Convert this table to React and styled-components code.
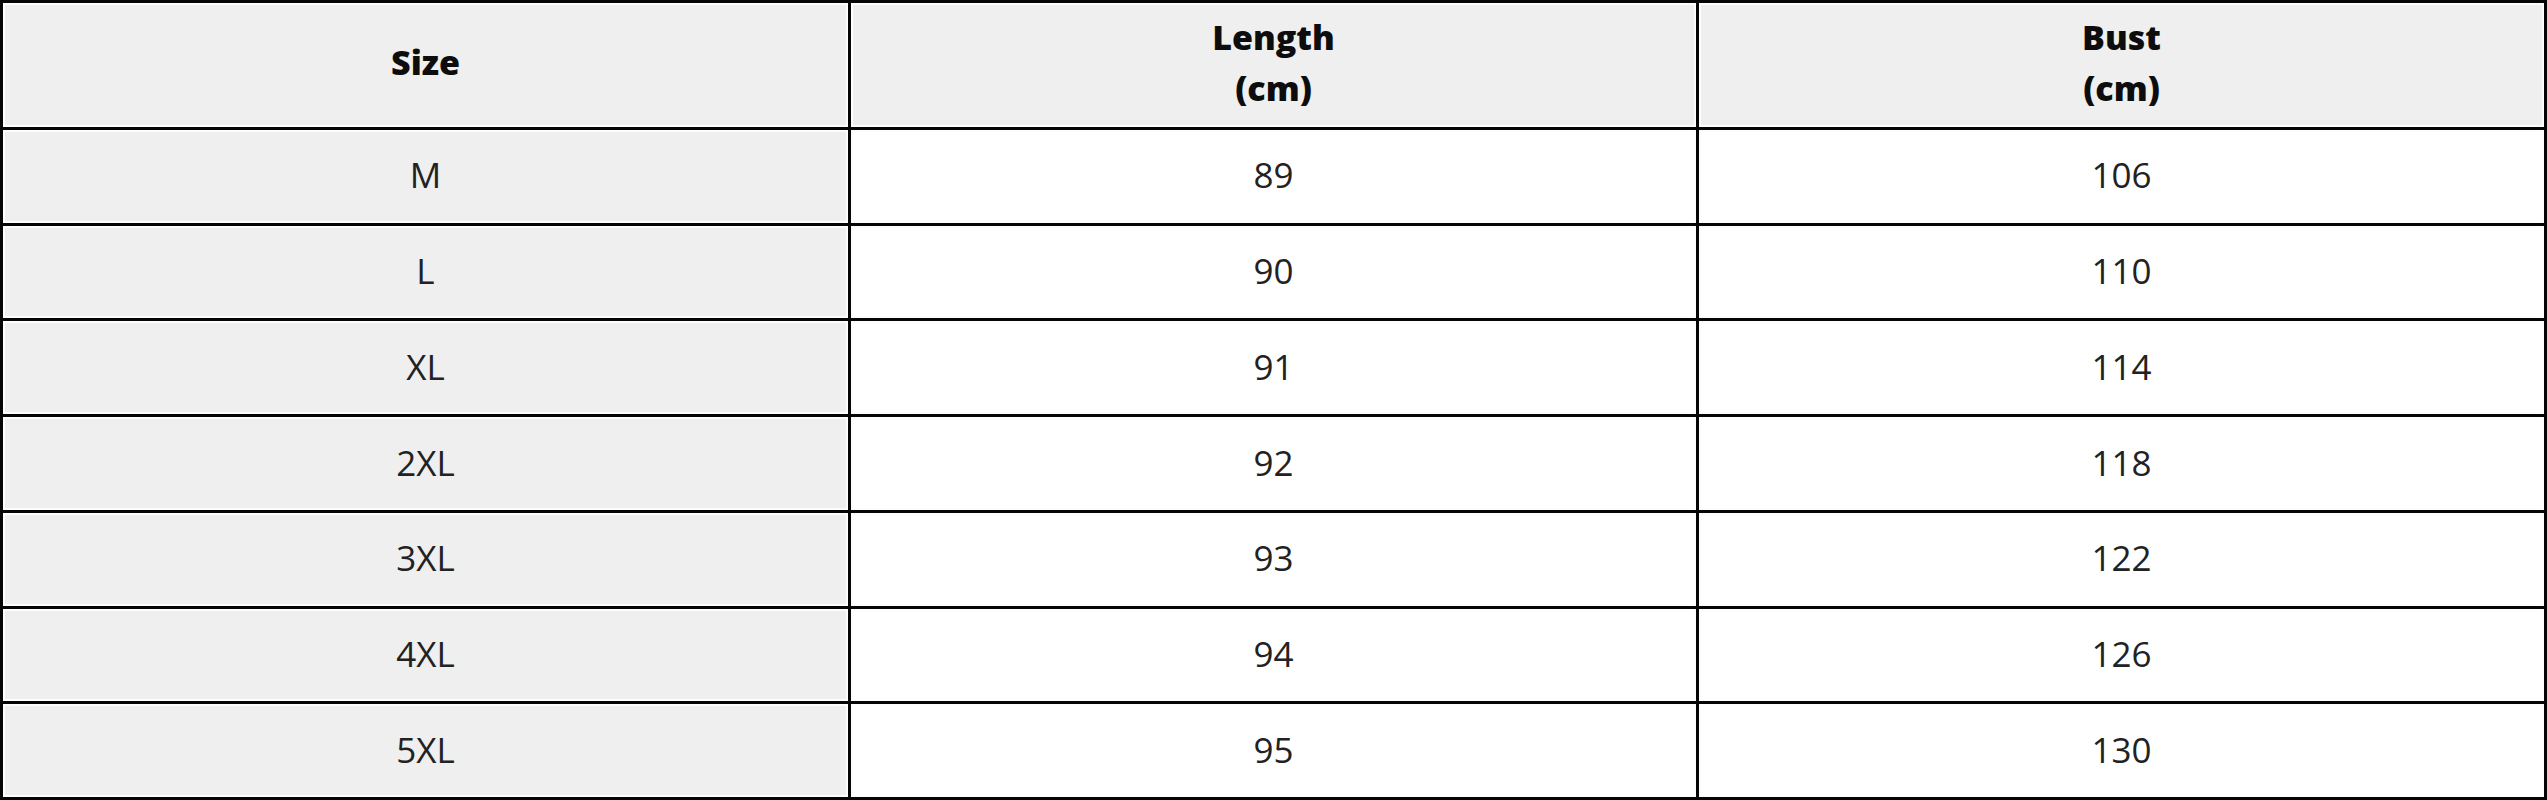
import styled, { createGlobalStyle } from "styled-components";

const GlobalStyle = createGlobalStyle`
  html, body {
    margin: 0;
    padding: 0;
    background: #ffffff;
  }
  body {
    font-family: "Open Sans", "DejaVu Sans", sans-serif;
  }
`;

const Table = styled.div`
  display: grid;
  grid-template-columns: repeat(3, 1fr);
  grid-template-rows: 124px repeat(7, 1fr);
  gap: 3px;
  padding: 3px;
  width: 2547px;
  height: 800px;
  box-sizing: border-box;
  background-color: #050505;
`;

const Cell = styled.div`
  display: flex;
  flex-direction: column;
  align-items: center;
  justify-content: center;
  padding-bottom: ${(p) => (p.$head ? "5px" : "2px")};
  border: 2px solid #fdfdfd;
  background-color: ${(p) => (p.$shaded ? "#efefef" : "#ffffff")};
  color: ${(p) => (p.$head ? "#0d0d0d" : "#222222")};
  font-size: ${(p) => (p.$head ? "34px" : "35px")};
  font-weight: ${(p) => (p.$head ? 800 : 400)};
  line-height: 1.48;
  text-align: center;
`;

const headers = [["Size"], ["Length", "(cm)"], ["Bust", "(cm)"]];

const rows = [
  ["M", 89, 106],
  ["L", 90, 110],
  ["XL", 91, 114],
  ["2XL", 92, 118],
  ["3XL", 93, 122],
  ["4XL", 94, 126],
  ["5XL", 95, 130],
];

function App() {
  return (
    <>
      <GlobalStyle />
      <Table>
        {headers.map((lines) => (
          <Cell key={lines[0]} $head $shaded>
            {lines.map((line) => (
              <span key={line}>{line}</span>
            ))}
          </Cell>
        ))}
        {rows.map(([size, length, bust]) => [
          <Cell key={size + "-s"} $shaded>
            {size}
          </Cell>,
          <Cell key={size + "-l"}>{length}</Cell>,
          <Cell key={size + "-b"}>{bust}</Cell>,
        ])}
      </Table>
    </>
  );
}

export default App;
